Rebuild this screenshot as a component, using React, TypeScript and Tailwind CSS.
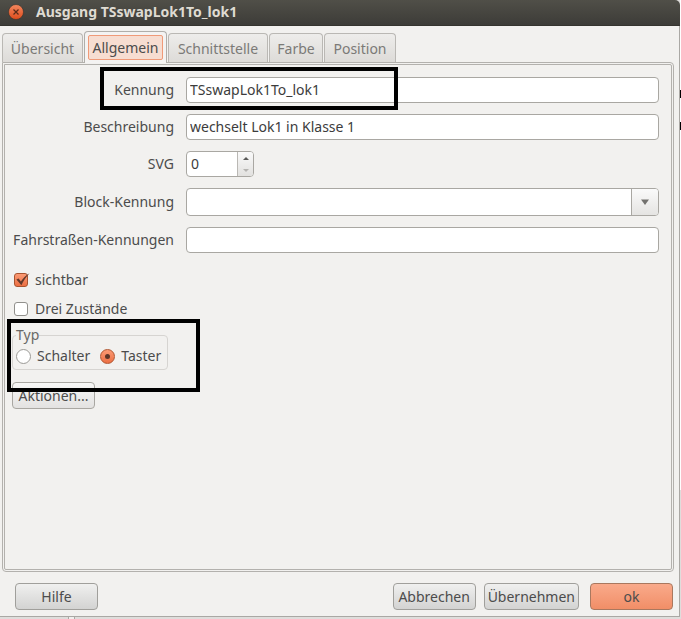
import type { ReactNode } from 'react'

const tabs = [
  { name: 'Übersicht', width: 'w-[81px]' },
  { name: 'Allgemein', width: 'w-[83px]' },
  { name: 'Schnittstelle', width: 'w-[100px]' },
  { name: 'Farbe', width: 'w-[54px]' },
  { name: 'Position', width: 'w-[72px]' },
]

const inputStyle =
  'h-[26px] w-full min-w-0 rounded-[4px] border border-[#a9a7a2] bg-white px-[3px] pb-[2px] text-[#3c3c3c] outline-none'

function TitleBar() {
  return (
    <header className="flex h-[26px] shrink-0 items-center gap-3 rounded-tr-[5px] border-b border-[#35342f] bg-linear-to-b from-[#504f48] to-[#3d3c38] pb-px pl-2">
      <button type="button" aria-label="Schließen" className="h-4 w-4">
        <svg viewBox="0 0 16 16" className="h-4 w-4">
          <defs>
            <linearGradient id="close" x1="0" y1="0" x2="0" y2="1">
              <stop offset="0" stopColor="#f4885f" />
              <stop offset="1" stopColor="#dd4c1c" />
            </linearGradient>
          </defs>
          <circle cx="8" cy="8" r="7.5" fill="url(#close)" stroke="#33312c" strokeWidth="0.6" />
          <path d="M5.5 5.5l5 5M10.5 5.5l-5 5" stroke="#5a2a18" strokeWidth="1.2" />
        </svg>
      </button>
      <h1 className="text-[14px] font-bold whitespace-nowrap text-[#dfdbd2]">Ausgang TSswapLok1To_lok1</h1>
    </header>
  )
}

function Tabs() {
  return (
    <div role="tablist" className="flex h-[31px] shrink-0 items-end gap-px pl-[2px] whitespace-nowrap">
      {tabs.map((tab) =>
        tab.name === 'Allgemein' ? (
          <button
            key={tab.name}
            type="button"
            role="tab"
            aria-selected="true"
            className={`${tab.width} relative z-10 -mb-px flex h-8 justify-center rounded-t-[4px] border border-b-0 border-[#b0aeaa] bg-[#f4f3f2] pt-[3px]`}
          >
            <span className="flex h-[25px] w-[75px] items-center justify-center rounded-[2px] border border-[#f09a78] bg-[#f7ddd1]">
              {tab.name}
            </span>
          </button>
        ) : (
          <button
            key={tab.name}
            type="button"
            role="tab"
            aria-selected="false"
            className={`${tab.width} flex h-[29px] items-center justify-center rounded-t-[4px] border border-b-0 border-[#bab8b4] bg-linear-to-b from-[#eeedeb] to-[#dddbd8] pt-px text-[#7b7a77]`}
          >
            {tab.name}
          </button>
        ),
      )}
    </div>
  )
}

function Row({ id, label, children }: { id: string; label: string; children: ReactNode }) {
  return (
    <div className="flex items-center gap-3">
      <label htmlFor={id} className="w-[169px] shrink-0 text-right whitespace-nowrap">
        {label}
      </label>
      <div className="flex min-w-0 flex-1">{children}</div>
    </div>
  )
}

function SpinBox() {
  return (
    <div className="flex h-[26px] w-[68px] overflow-hidden rounded-[4px] border border-[#a9a7a2] bg-white">
      <input id="svg" inputMode="numeric" defaultValue="0" className="w-[50px] min-w-0 px-1 text-[#3c3c3c] outline-none" />
      <div className="flex flex-1 flex-col border-l border-[#bab8b4] bg-linear-to-b from-[#fafafa] to-[#e2e1df]">
        <button type="button" aria-label="Mehr" className="flex flex-1 items-center justify-center">
          <svg viewBox="0 0 6 3" className="h-[3px] w-[6px]">
            <path d="M0 3L3 0L6 3Z" fill="#5a5a58" />
          </svg>
        </button>
        <button type="button" aria-label="Weniger" className="flex flex-1 items-center justify-center">
          <svg viewBox="0 0 6 3" className="h-[3px] w-[6px]">
            <path d="M0 0L3 3L6 0Z" fill="#b5b4b1" />
          </svg>
        </button>
      </div>
    </div>
  )
}

function BlockSelect() {
  return (
    <div className="relative flex h-7 w-full">
      <select
        id="block"
        className="h-7 w-full appearance-none rounded-[4px] border border-[#a9a7a2] bg-white px-1 outline-none"
      >
        <option></option>
      </select>
      <span className="pointer-events-none absolute inset-y-px right-px flex w-[27px] items-center justify-center rounded-r-[3px] border-l border-[#a9a7a2] bg-linear-to-b from-[#fafafa] to-[#e5e4e2]">
        <svg viewBox="0 0 8 6" className="h-[6px] w-2">
          <path d="M0 0.5H8L4 6Z" fill="#73726f" />
        </svg>
      </span>
    </div>
  )
}

function Check({ label, checked }: { label: string; checked?: boolean }) {
  return (
    <label className="flex h-5 w-fit items-center gap-[5px]">
      <span className="relative flex h-4 w-4 items-center">
        <input
          type="checkbox"
          defaultChecked={checked}
          className="peer h-[14px] w-[14px] appearance-none rounded-[3px] border border-[#91908c] bg-white checked:border-[#a9532f] checked:bg-linear-to-b checked:from-[#fb9a74] checked:to-[#ec6f43]"
        />
        <svg viewBox="0 0 16 16" className="pointer-events-none absolute inset-0 hidden h-4 w-4 peer-checked:block">
          <path d="M2.4 7.6L4.6 6.6L6.9 9.6C9 6.2 11.6 3.2 15.6 1.2C12 5 9.8 8.3 7.4 13.2Z" fill="#63382a" />
        </svg>
      </span>
      {label}
    </label>
  )
}

function Radio({ label, checked }: { label: string; checked?: boolean }) {
  return (
    <label className="flex h-5 items-center gap-[6px]">
      <span className="relative flex h-[15px] w-[15px]">
        <input
          type="radio"
          name="typ"
          defaultChecked={checked}
          className="peer h-[15px] w-[15px] appearance-none rounded-full border border-[#9b9a96] bg-white checked:border-[#b0552f] checked:bg-linear-to-b checked:from-[#fb9a74] checked:to-[#ec6f43]"
        />
        <span className="pointer-events-none absolute inset-[5px] hidden rounded-full bg-[#5c3527] peer-checked:block" />
      </span>
      {label}
    </label>
  )
}

function Button({ children, look = 'gray' }: { children: ReactNode; look?: 'gray' | 'light' | 'primary' }) {
  const looks = {
    gray: 'border-[#a09f9b] from-[#f0f0ef] to-[#d3d3d2]',
    light: 'border-[#a9a7a2] from-[#f8f8f7] to-[#e3e2e1]',
    primary: 'border-[#a9785f] from-[#f9aa8b] to-[#f18e67]',
  }
  return (
    <button
      type="button"
      className={`${looks[look]} flex h-[27px] min-w-[83px] shrink-0 items-center justify-center rounded-[4px] border bg-linear-to-b px-[3px] whitespace-nowrap`}
    >
      {children}
    </button>
  )
}

export default function App() {
  return (
    <div className="relative flex min-h-screen flex-col bg-[#dfdddb] pr-px pb-[2px] font-['Noto_Sans','Open_Sans',sans-serif] text-[14px] leading-5 text-[#4c4c4c]">
      {/* desktop showing behind the window edges */}
      <div className="absolute top-0 right-0 h-[490px] w-px bg-white" />
      <div className="absolute top-[90px] right-0 h-2 w-px bg-black" />
      <div className="absolute top-[122px] right-0 h-2 w-px bg-black" />
      <div className="absolute bottom-0 left-[68px] h-[2px] w-[7px] border-x border-[#aaa8a4] bg-[#f1f0ee]" />

      <div className="relative flex flex-1 flex-col rounded-tr-[5px] bg-[#f2f1ef]">
        <TitleBar />
        <div className="flex flex-1 flex-col border-r border-b border-[#aaa8a4] pt-[5px]">
          <Tabs />
          <main
            role="tabpanel"
            className="mr-[5px] ml-[2px] flex flex-1 flex-col rounded-b-[4px] rounded-tr-[4px] border-[3px] border-double border-[#b3b1ad] pt-3"
          >
            <div className="flex flex-col gap-[11px] pr-3">
              <Row id="kennung" label="Kennung">
                <input id="kennung" defaultValue="TSswapLok1To_lok1" className={inputStyle} />
              </Row>
              <Row id="beschreibung" label="Beschreibung">
                <input id="beschreibung" defaultValue="wechselt Lok1 in Klasse 1" className={inputStyle} />
              </Row>
              <Row id="svg" label="SVG">
                <SpinBox />
              </Row>
              <Row id="block" label="Block-Kennung">
                <BlockSelect />
              </Row>
              <Row id="fahrstrassen" label="Fahrstraßen-Kennungen">
                <input id="fahrstrassen" className={inputStyle} />
              </Row>
            </div>
            <div className="mt-[17px] flex flex-col gap-[9px] pl-[9px]">
              <Check label="sichtbar" checked />
              <Check label="Drei Zustände" />
            </div>
            <fieldset className="mt-[6px] ml-[7px] w-[156px] rounded-[4px] border border-[#d6d4d1] pt-px pb-[3px] pl-[3px] whitespace-nowrap">
              <legend className="h-5 text-[#6a6967]">Typ</legend>
              <div className="flex gap-[10px]">
                <Radio label="Schalter" />
                <Radio label="Taster" checked />
              </div>
            </fieldset>
            <div className="mt-3 flex pl-[7px]">
              <Button look="light">Aktionen...</Button>
            </div>
          </main>
          <footer className="flex items-center pt-[11px] pr-[6px] pb-[6px] pl-[15px]">
            <Button>Hilfe</Button>
            <div className="ml-auto flex gap-2">
              <Button>Abbrechen</Button>
              <Button>Übernehmen</Button>
            </div>
            <div className="ml-[11px]">
              <Button look="primary">ok</Button>
            </div>
          </footer>
        </div>
      </div>

      {/* highlight frames */}
      <div className="pointer-events-none absolute top-[67px] left-[100px] z-20 h-[43px] w-[298px] border-4 border-black" />
      <div className="pointer-events-none absolute top-[319px] left-[7px] z-20 h-[73px] w-[193px] border-4 border-black" />
    </div>
  )
}
